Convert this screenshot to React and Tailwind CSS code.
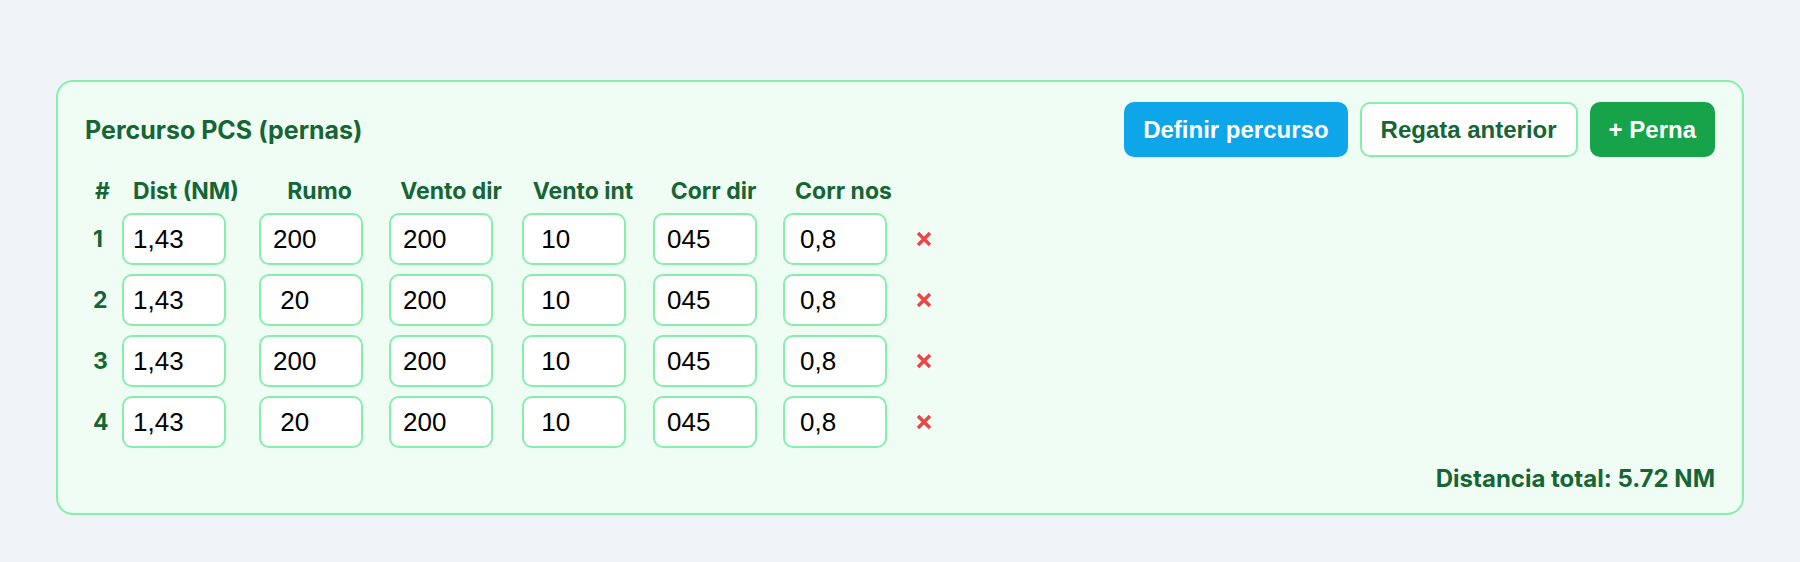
import React from "react";

const rows = [
  ["1,43", "200", "200", " 10", "045", "0,8"],
  ["1,43", " 20", "200", " 10", "045", "0,8"],
  ["1,43", "200", "200", " 10", "045", "0,8"],
  ["1,43", " 20", "200", " 10", "045", "0,8"],
];

const pads = ["pl-[9px]", "pl-[12px]", "pl-[12px]", "pl-[10px]", "pl-[12px]", "pl-[15px]"];

const headers = ["Dist (NM)", "Rumo", "Vento dir", "Vento int", "Corr dir", "Corr nos"];

const grid =
  "grid grid-cols-[37px_137px_130px_133px_131px_130px_130px_auto]";

function XIcon() {
  return (
    <svg width="18" height="18" viewBox="0 0 18 18" className="text-[#ef4444]">
      <path d="M3 3 L15 15 M15 3 L3 15" stroke="currentColor" strokeWidth="3.4" strokeLinecap="butt" fill="none" />
    </svg>
  );
}

export default function App() {
  return (
    <div className="min-h-screen bg-[#f0f4f8] pt-[80px] px-[56px] font-['Inter',sans-serif]">
      <div className="rounded-[17px] border-2 border-[#86efac] bg-[#f0fdf4] px-[27px] pt-[20px] pb-[19px]">
        <div className="flex h-[55px] items-center justify-between">
          <h2 className="text-[25px] font-bold leading-[30px] text-[#166534]">Percurso PCS (pernas)</h2>
          <div className="flex gap-[12px] font-['Liberation_Sans',Arial,sans-serif] text-[24px] font-bold">
            <button className="h-[55px] rounded-[10px] bg-[#0ea5e9] px-[19px] text-white">Definir percurso</button>
            <button className="h-[55px] rounded-[10px] border-2 border-[#86efac] bg-white px-[19px] text-[#166534]">Regata anterior</button>
            <button className="h-[55px] rounded-[10px] bg-[#16a34a] px-[19px] text-white">+ Perna</button>
          </div>
        </div>

        <div className={`${grid} mt-[20px] text-[23px] font-bold leading-[28px] text-[#166534]`}>
          <div className="pl-[10px]">#</div>
          {headers.map((h) => (
            <div key={h} className="pr-[9px] text-center whitespace-nowrap">{h}</div>
          ))}
          <div />
        </div>

        <div className="mt-[8px] flex flex-col gap-[9px]">
          {rows.map((r, i) => (
            <div key={i} className={`${grid} items-center`}>
              <div className="pl-[8px] text-[23px] font-bold text-[#166534]">{i + 1}</div>
              {r.map((v, j) => (
                <div key={j}>
                  <input
                    readOnly
                    value={v}
                    className={`h-[52px] w-[104px] rounded-[10px] border-2 border-[#86efac] bg-white ${pads[j]} text-[26px] text-black outline-none font-['Liberation_Sans',Arial,sans-serif] whitespace-pre`}
                  />
                </div>
              ))}
              <div className="flex items-center pl-[2px]">
                <XIcon />
              </div>
            </div>
          ))}
        </div>

        <div className="mt-[16px] text-right text-[24px] font-bold leading-[30px] text-[#166534]">
          Distancia total: 5.72 NM
        </div>
      </div>
    </div>
  );
}
